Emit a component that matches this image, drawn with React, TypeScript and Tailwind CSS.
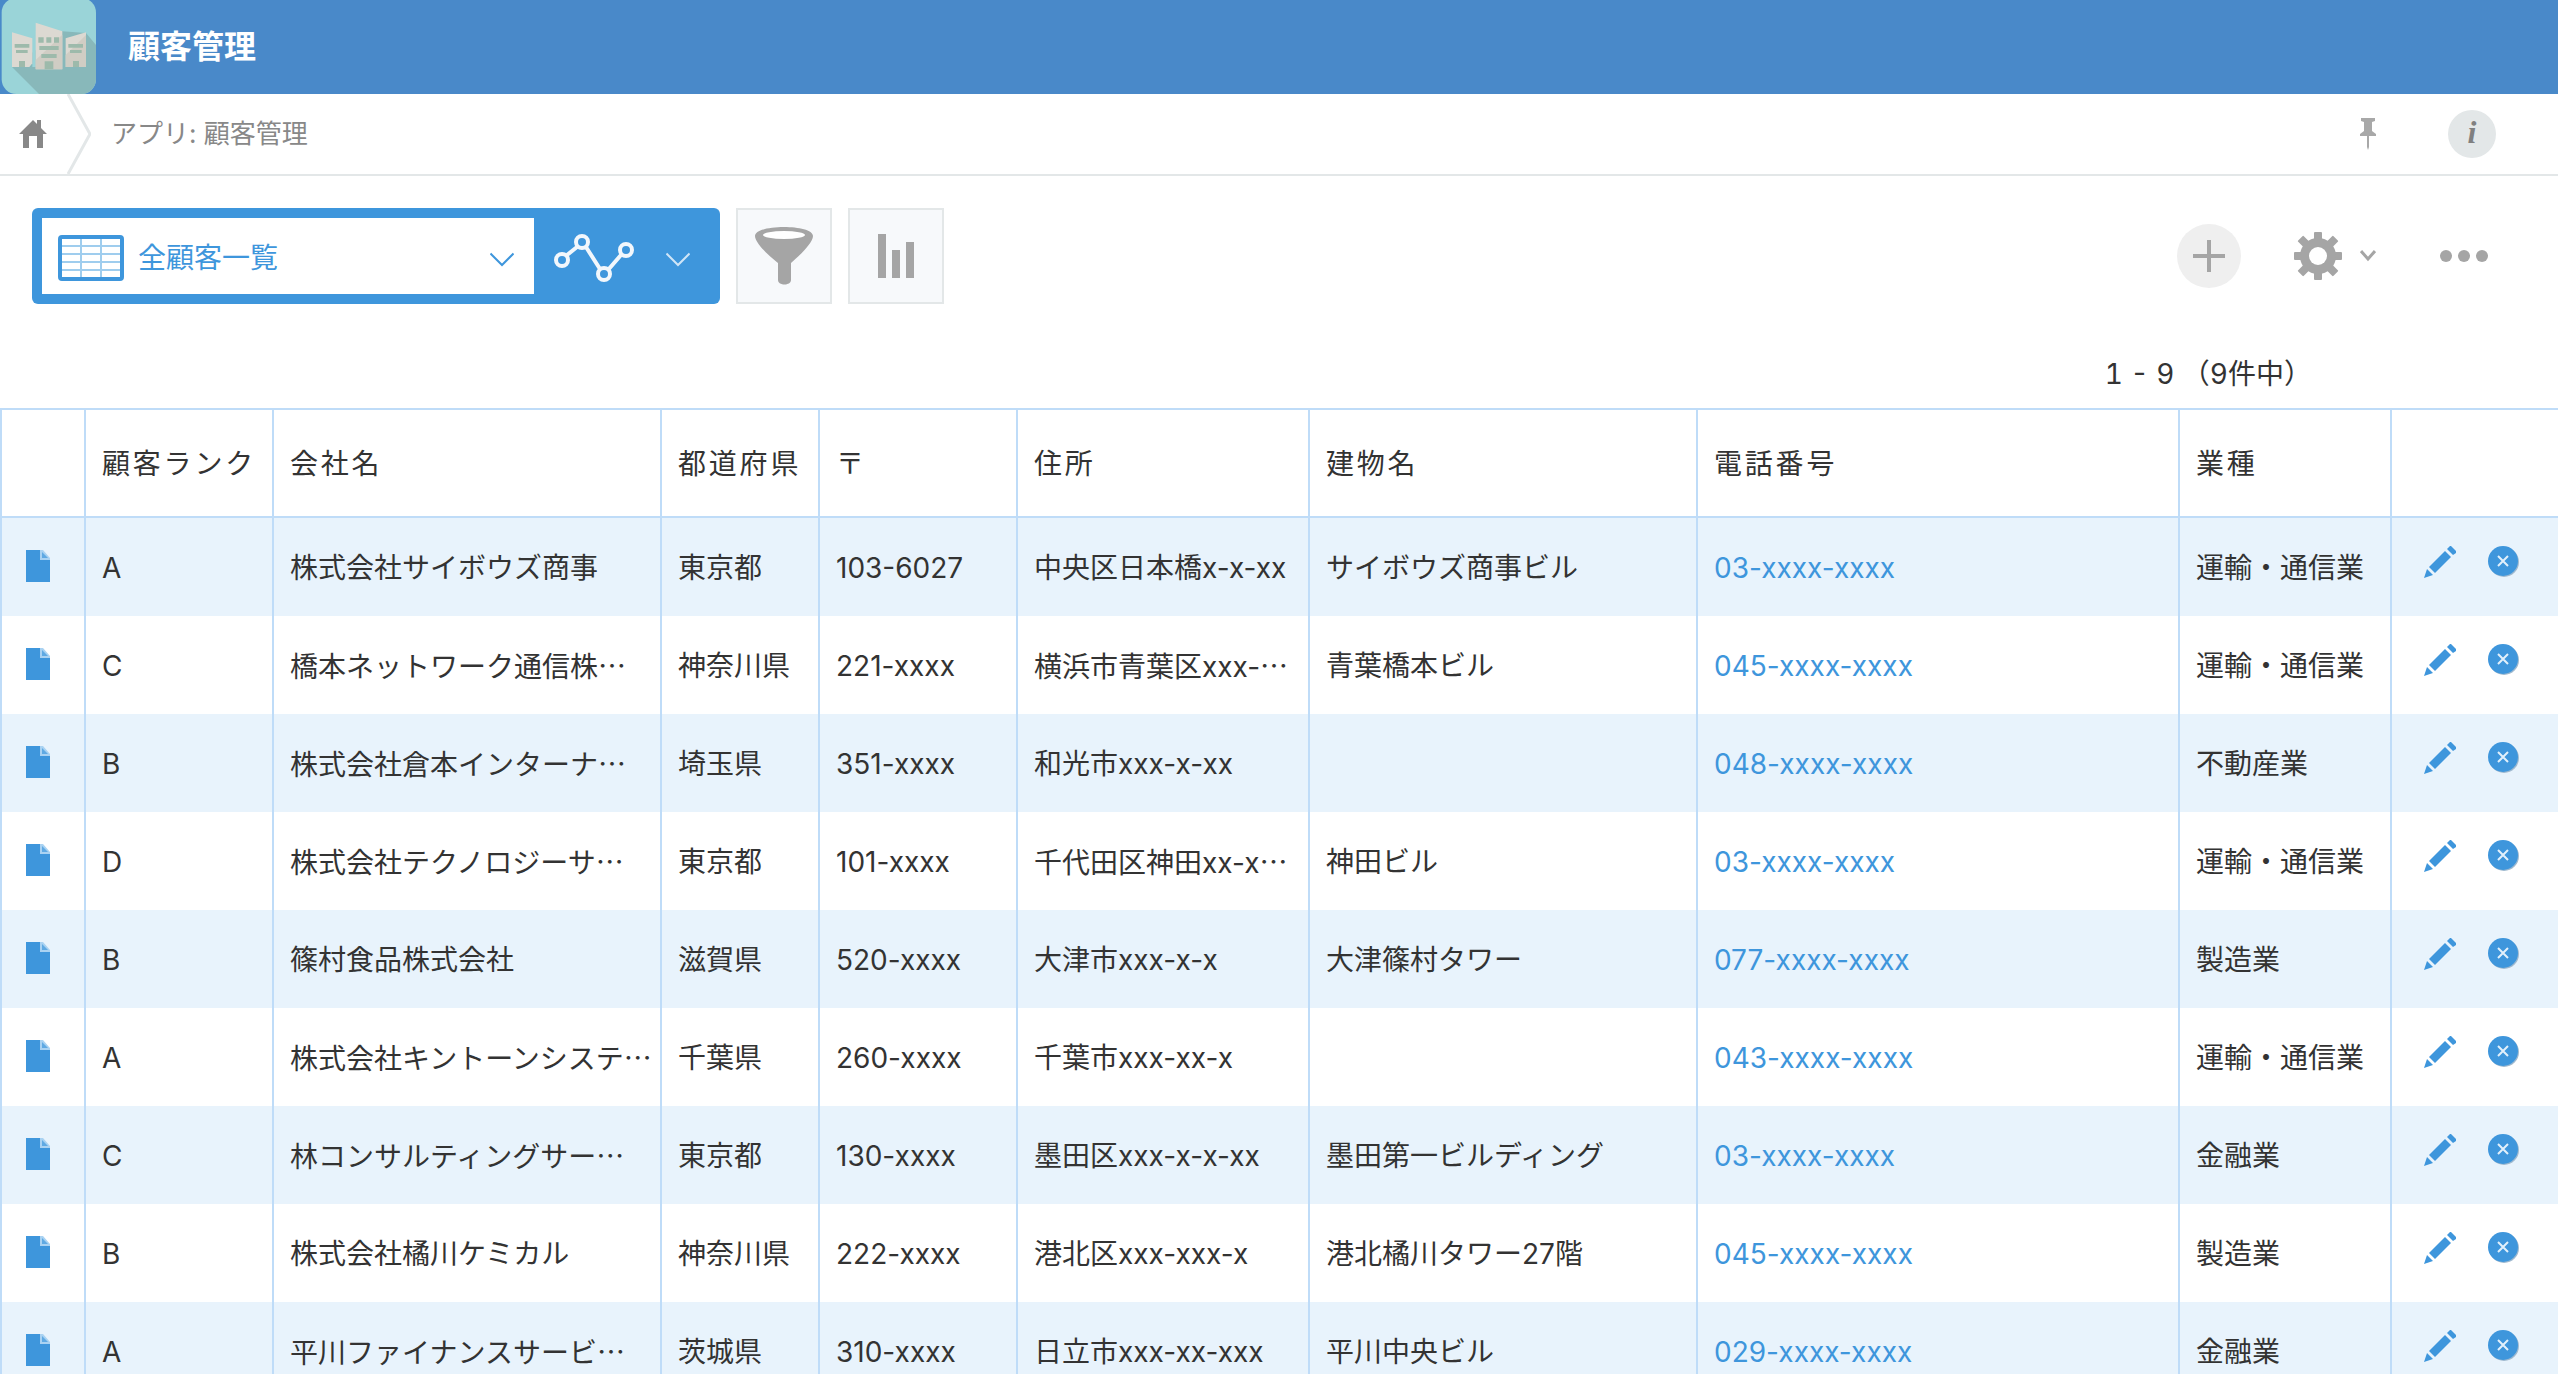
import type { ReactNode } from 'react';

interface Customer {
  rank: string;
  company: string;
  prefecture: string;
  zip: string;
  address: string;
  building: string;
  tel: string;
  industry: string;
}

const customers: Customer[] = [
  { rank: 'A', company: '株式会社サイボウズ商事', prefecture: '東京都', zip: '103-6027', address: '中央区日本橋x-x-xx', building: 'サイボウズ商事ビル', tel: '03-xxxx-xxxx', industry: '運輸・通信業' },
  { rank: 'C', company: '橋本ネットワーク通信株…', prefecture: '神奈川県', zip: '221-xxxx', address: '横浜市青葉区xxx-…', building: '青葉橋本ビル', tel: '045-xxxx-xxxx', industry: '運輸・通信業' },
  { rank: 'B', company: '株式会社倉本インターナ…', prefecture: '埼玉県', zip: '351-xxxx', address: '和光市xxx-x-xx', building: '', tel: '048-xxxx-xxxx', industry: '不動産業' },
  { rank: 'D', company: '株式会社テクノロジーサ…', prefecture: '東京都', zip: '101-xxxx', address: '千代田区神田xx-x…', building: '神田ビル', tel: '03-xxxx-xxxx', industry: '運輸・通信業' },
  { rank: 'B', company: '篠村食品株式会社', prefecture: '滋賀県', zip: '520-xxxx', address: '大津市xxx-x-x', building: '大津篠村タワー', tel: '077-xxxx-xxxx', industry: '製造業' },
  { rank: 'A', company: '株式会社キントーンシステ…', prefecture: '千葉県', zip: '260-xxxx', address: '千葉市xxx-xx-x', building: '', tel: '043-xxxx-xxxx', industry: '運輸・通信業' },
  { rank: 'C', company: '林コンサルティングサー…', prefecture: '東京都', zip: '130-xxxx', address: '墨田区xxx-x-x-xx', building: '墨田第一ビルディング', tel: '03-xxxx-xxxx', industry: '金融業' },
  { rank: 'B', company: '株式会社橘川ケミカル', prefecture: '神奈川県', zip: '222-xxxx', address: '港北区xxx-xxx-x', building: '港北橘川タワー27階', tel: '045-xxxx-xxxx', industry: '製造業' },
  { rank: 'A', company: '平川ファイナンスサービ…', prefecture: '茨城県', zip: '310-xxxx', address: '日立市xxx-xx-xxx', building: '平川中央ビル', tel: '029-xxxx-xxxx', industry: '金融業' },
];

const headers = ['顧客ランク', '会社名', '都道府県', '〒', '住所', '建物名', '電話番号', '業種'];

function AppIcon() {
  return (
    <svg viewBox="0 0 288 282" className="h-[94px] w-24 shrink-0" aria-hidden="true">
      <defs>
        <clipPath id="app-icon">
          <rect x="5" y="-6" width="283" height="288" rx="44" />
        </clipPath>
      </defs>
      <g clipPath="url(#app-icon)">
        <rect width="288" height="282" fill="#9ad4d8" />
        <path d="M36 201 117 282H288V135L258 99 187 94Z" fill="#88b8ba" />
        <path d="M97 115 107 105V201H97Z" fill="#9ad4d8" />
        <path d="M36 97 97 115V190L88 201H36Z" fill="#dcd9d2" />
        <path d="M107 68 187 94V208H107Z" fill="#dcd9d2" />
        <path d="M187 104V208H107V180Z" fill="#d0cdc4" />
        <path d="M197 115 258 97V201H197Z" fill="#dcd9d2" />
        <path d="M258 105V201H197V165Z" fill="#d0cdc4" />
        <path
          d="M44 132H88V143H44ZM48 150H83V159H48ZM57 183H75V201H57ZM115 112H131V128H115ZM139 112H154V128H139ZM162 112H177V128H162ZM118 138H176V150H118ZM124 162H170V174H124ZM134 184H160V208H134ZM205 132H249V143H205ZM210 150H245V159H210ZM219 183H237V201H219Z"
          fill="#9dbaab"
        />
      </g>
    </svg>
  );
}

function ChevronDown({ className }: { className: string }) {
  return (
    <svg viewBox="0 0 24 16" className={className} fill="none" stroke="currentColor" strokeWidth="2" aria-hidden="true">
      <path d="M0.5 1.5 12 13 23.5 1.5" />
    </svg>
  );
}

function TableIcon() {
  return (
    <svg viewBox="0 0 66 46" className="h-[46px] w-[66px] shrink-0" fill="none" aria-hidden="true">
      <path d="M3 11H63M3 19H63M3 27H63M3 35H63M23 3V43M43 3V43" stroke="#9fcdee" strokeWidth="2" />
      <rect x="2" y="2" width="62" height="42" rx="2" stroke="#3e96dc" strokeWidth="4" />
    </svg>
  );
}

function GraphIcon() {
  return (
    <svg viewBox="0 0 80 48" className="h-12 w-20" fill="none" stroke="#f2f7fc" strokeWidth="4" aria-hidden="true">
      <path d="M13 21 23 13M32 13 46 35M54 36 67 21" />
      <circle cx="8" cy="26" r="6" />
      <circle cx="28" cy="8" r="6" />
      <circle cx="50" cy="40" r="6" />
      <circle cx="72" cy="16" r="6" />
    </svg>
  );
}

function GearIcon() {
  return (
    <svg viewBox="-24 -24 48 48" className="size-12" fill="#a5a5a5" aria-hidden="true">
      {[0, 45, 90, 135].map((angle) => (
        <rect key={angle} x="-4" y={angle % 90 ? -25 : -24} width="8" height={angle % 90 ? 50 : 48} rx="1" transform={`rotate(${angle})`} />
      ))}
      <circle r="18" />
      <circle r="9" fill="#fff" />
    </svg>
  );
}

function FileIcon() {
  return (
    <svg viewBox="0 0 24 32" className="h-8 w-6" aria-hidden="true">
      <path d="M0 0H16L24 9V32H0Z" fill="#3e96dc" />
      <path d="M14 0H17L24 8V10H14Z" fill="#a9d2f2" />
      <path d="M16 2V8H22Z" fill="#5fa9e3" />
    </svg>
  );
}

function PencilIcon() {
  return (
    <svg viewBox="0 0 32 32" className="size-8" fill="#3e96dc" aria-hidden="true">
      <path d="M27 0 32 5V7L29 9 23 3 26 0Z" />
      <path d="M21 5 27 11 11 27 5 21Z" />
      <path d="M3 23 9 29 0 32Z" />
    </svg>
  );
}

function DeleteIcon() {
  return (
    <svg viewBox="0 0 32 32" className="size-8" aria-hidden="true">
      <circle cx="16" cy="16" r="15" fill="#9fb9cf" />
      <circle cx="15" cy="15" r="15" fill="#3e96dc" />
      <path d="M10 10 20 20M20 10 10 20" stroke="#e2f0fb" strokeWidth="2" />
    </svg>
  );
}

// The Latin face puts the ellipsis on the baseline, the Japanese one centres it.
function CellText({ text }: { text: string }) {
  if (!text.endsWith('…')) return <>{text}</>;
  return (
    <>
      {text.slice(0, -1)}
      <span className="font-['Noto_Sans_CJK_JP',sans-serif]">…</span>
    </>
  );
}

function Cell({ children }: { children: ReactNode }) {
  return <td className="overflow-hidden border-l-2 border-[#bfdcf8] pt-0.5 pl-4 whitespace-nowrap">{children}</td>;
}

function Header() {
  return (
    <header className="flex h-[94px] items-center gap-8 bg-[#4989c9]">
      <AppIcon />
      <h1 className="text-[32px] leading-[48px] font-bold text-white">顧客管理</h1>
    </header>
  );
}

function Breadcrumb() {
  return (
    <nav className="flex h-[82px] items-center border-b-2 border-[#e3e7e8] pr-[62px] text-[26px] leading-10 text-[#888888]">
      <a href="#home" aria-label="ホーム" className="pl-[19px]">
        <svg viewBox="0 0 28 28" className="size-7" fill="#888888" aria-hidden="true">
          <path d="M14 0 18 4V0H22V8L28 14H24V28H18V16H10V28H4V14H0Z" />
        </svg>
      </a>
      <svg viewBox="0 0 24 80" className="ml-5 h-20 w-6" fill="none" stroke="#e3e7e8" strokeWidth="3" aria-hidden="true">
        <path d="M1 0 23 40 1 80" />
      </svg>
      <a href="#app" className="ml-5 flex-1">アプリ: 顧客管理</a>
      <button type="button" aria-label="ピン留め" className="mr-[72px]">
        <svg viewBox="0 0 16 32" className="h-8 w-4" fill="#a8a8a8" aria-hidden="true">
          <path d="M1 0H15V3L12 4V13L16 16V18H9V29L8 32 7 29V18H0V16L4 13V4L1 3Z" />
        </svg>
      </button>
      <button
        type="button"
        aria-label="アプリの説明"
        className="flex size-12 items-center justify-center rounded-full bg-[#e3e7e8] pb-1 font-['Liberation_Serif',serif] text-[32px] leading-10 font-bold text-[#808080] italic"
      >
        i
      </button>
    </nav>
  );
}

function Toolbar() {
  return (
    <div className="flex items-center px-8 pt-8">
      <div className="flex h-24 items-center rounded-md bg-[#3e96dc] p-[10px] pr-0">
        <label className="flex h-[76px] w-[492px] items-center bg-white pt-1 pr-5 pl-4 text-[#3e96dc]">
          <TableIcon />
          <select aria-label="一覧" className="ml-[14px] h-full flex-1 appearance-none bg-transparent text-[28px]">
            <option>全顧客一覧</option>
          </select>
          <ChevronDown className="pointer-events-none mt-1 h-4 w-6" />
        </label>
        <button type="button" aria-label="グラフ" className="flex h-full w-[186px] items-center gap-8 pt-1 pl-5">
          <GraphIcon />
          <ChevronDown className="mt-1 h-4 w-6 text-[#cfe5f7]" />
        </button>
      </div>
      <button type="button" aria-label="絞り込む" className="ml-4 flex size-24 items-center justify-center border-2 border-[#e3e7e8] bg-[#f7f9fb]">
        <svg viewBox="0 0 58 58" className="size-[58px]" fill="#a5a5a5" aria-hidden="true">
          <path d="M0 9C0-3 58-3 58 9C58 16 44 29 36 36V53C36 59 23 59 23 53V36C14 29 0 16 0 9Z" />
          <ellipse cx="29" cy="8" rx="21" ry="4" fill="#fff" />
        </svg>
      </button>
      <button type="button" aria-label="集計する" className="ml-4 flex size-24 items-center justify-center border-2 border-[#e3e7e8] bg-[#f7f9fb]">
        <svg viewBox="0 0 38 46" className="h-[46px] w-[38px]" fill="#a5a5a5" aria-hidden="true">
          <path d="M1 1H9V45H1ZM15 17H23V45H15ZM29 9H37V45H29Z" />
        </svg>
      </button>

      <div className="mr-[38px] ml-auto flex items-center">
        <button type="button" aria-label="レコードを追加する" className="size-16 rounded-full bg-[#efefef]">
          <svg viewBox="0 0 64 64" stroke="#a5a5a5" strokeWidth="4" aria-hidden="true">
            <path d="M16 32H48M32 16V48" />
          </svg>
        </button>
        <button type="button" aria-label="アプリを設定する" className="ml-[53px] flex items-center gap-[18px] text-[#a5a5a5]">
          <GearIcon />
          <svg viewBox="0 0 16 12" className="h-3 w-4" fill="none" stroke="currentColor" strokeWidth="3" aria-hidden="true">
            <path d="M1 1 8 9 15 1" />
          </svg>
        </button>
        <button type="button" aria-label="オプション" className="ml-16">
          <svg viewBox="0 0 48 12" className="h-3 w-12" fill="#a5a5a5" aria-hidden="true">
            <circle cx="6" cy="6" r="6" />
            <circle cx="24" cy="6" r="6" />
            <circle cx="42" cy="6" r="6" />
          </svg>
        </button>
      </div>
    </div>
  );
}

function RecordTable() {
  return (
    <table className="w-full table-fixed border-separate border-spacing-0 border-t-2 border-[#bfdcf8]">
      <colgroup>
        <col className="w-[84px]" />
        <col className="w-[188px]" />
        <col className="w-[388px]" />
        <col className="w-[158px]" />
        <col className="w-[198px]" />
        <col className="w-[292px]" />
        <col className="w-[388px]" />
        <col className="w-[482px]" />
        <col className="w-[212px]" />
        <col />
      </colgroup>
      <thead>
        <tr className="h-[108px]">
          <th aria-label="詳細" className="border-b-2 border-l-2 border-[#bfdcf8]" />
          {headers.map((label) => (
            <th key={label} className="border-b-2 border-l-2 border-[#bfdcf8] pt-0.5 pl-4 text-left font-normal tracking-widest whitespace-nowrap">
              {label}
            </th>
          ))}
          <th aria-label="操作" className="border-b-2 border-l-2 border-[#bfdcf8]" />
        </tr>
      </thead>
      <tbody>
        {customers.map((c) => (
          <tr key={c.company} className="h-[98px] odd:bg-[#e8f3fc]">
            <td className="border-l-2 border-[#bfdcf8] pb-0.5 pl-6">
              <a href="#record" aria-label="レコードの詳細を表示する" className="block w-6">
                <FileIcon />
              </a>
            </td>
            <Cell>{c.rank}</Cell>
            <Cell><CellText text={c.company} /></Cell>
            <Cell>{c.prefecture}</Cell>
            <Cell>{c.zip}</Cell>
            <Cell><CellText text={c.address} /></Cell>
            <Cell>{c.building}</Cell>
            <Cell>
              <a href="#tel" className="text-[#3e96dc]">{c.tel}</a>
            </Cell>
            <Cell>{c.industry}</Cell>
            <td className="border-l-2 border-[#bfdcf8] pb-2.5 pl-8">
              <div className="flex items-center gap-8">
                <button type="button" aria-label="編集"><PencilIcon /></button>
                <button type="button" aria-label="削除"><DeleteIcon /></button>
              </div>
            </td>
          </tr>
        ))}
      </tbody>
    </table>
  );
}

export default function App() {
  return (
    <div lang="ja" className="h-screen overflow-hidden bg-white font-['Inter','Noto_Sans_CJK_JP',sans-serif] text-[28px] leading-10 text-[#333333]">
      <Header />
      <Breadcrumb />
      <main>
        <Toolbar />
        <p className="pt-[50px] pr-[246px] pb-[14px] text-right tabular-nums">1 - 9 （9件中）</p>
        <RecordTable />
      </main>
    </div>
  );
}
